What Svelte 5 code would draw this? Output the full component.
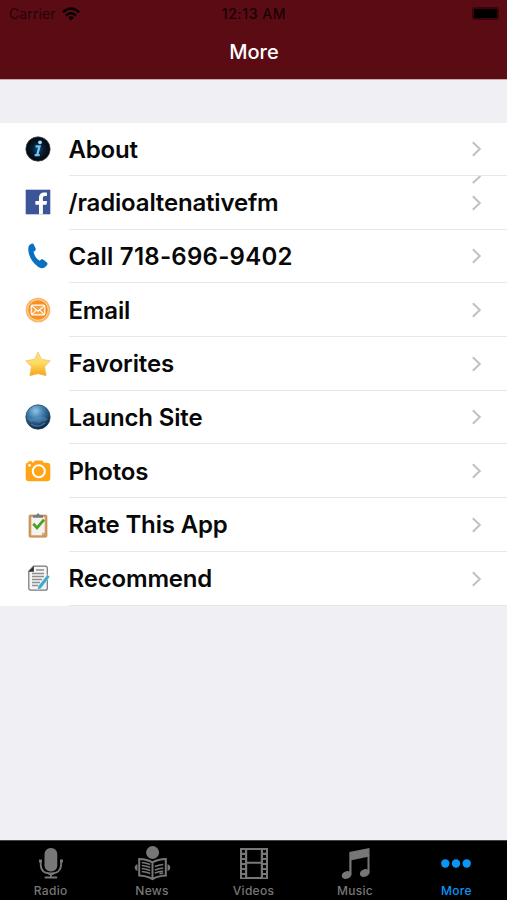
<script lang="ts">
	interface IRow {
		icon: string;
		label: string;
	}

	const rows: IRow[] = [
		{ icon: 'about', label: 'About' },
		{ icon: 'facebook', label: '/radioaltenativefm' },
		{ icon: 'call', label: 'Call 718-696-9402' },
		{ icon: 'email', label: 'Email' },
		{ icon: 'favorites', label: 'Favorites' },
		{ icon: 'site', label: 'Launch Site' },
		{ icon: 'photos', label: 'Photos' },
		{ icon: 'rate', label: 'Rate This App' },
		{ icon: 'recommend', label: 'Recommend' }
	];

	const tabs = ['Radio', 'News', 'Videos', 'Music', 'More'];
	let active = $state('More');
</script>

<div class="screen">
	<header>
		<div class="status">
			<div class="carrier">
				<span>Carrier</span>
				<svg width="18" height="14" viewBox="0 0 18 14">
					<g fill="none" stroke="#080002" stroke-width="2.5">
						<path d="M1 5.3Q9-2.3 17 5.3" />
						<path d="M4 8.6Q9 3.8 14 8.6" />
					</g>
					<path d="M6 10.6Q9 8 12 10.6L9 13.8Z" fill="#080002" />
				</svg>
			</div>
			<span class="time">12:13 AM</span>
			<div class="battery"><i></i></div>
		</div>
		<h1>More</h1>
	</header>

	<main>
		<ul>
			{#each rows as row}
				<li>
					<svg class="icon" viewBox="0 0 26 26">
						{#if row.icon === 'about'}
							<defs>
								<radialGradient id="info">
									<stop offset="0" stop-color="#124a75" />
									<stop offset="0.5" stop-color="#081b2d" />
									<stop offset="1" stop-color="#03070c" />
								</radialGradient>
							</defs>
							<circle cx="13" cy="13" r="12.2" fill="url(#info)" stroke="#4b5259" stroke-width="0.7" />
							<circle cx="15" cy="6.3" r="1.9" fill="#9fdcfb" />
							<path d="M10.5 10.300h4l-2.400 8.900h2.600M9.600 19.200h3" fill="none" stroke="#6ec5f5" stroke-width="2.3" />
						{:else if row.icon === 'facebook'}
							<rect x="0.7" y="0.7" width="24.6" height="24.6" fill="#3c5598" />
							<path d="M14 25.3v-9.600h-3.600v-3.600H14V9c0-3.700 2.200-5.500 5.400-5.500h2.500v3.600h-1.800c-1.600 0-2.200.8-2.200 2.200v2.800h4.200l-.6 3.600h-3.600v9.600z" fill="#fff" />
						{:else if row.icon === 'call'}
							<path d="M5.200 1.400C7 .2 8.200.4 8.900 1.700l1.700 3.600c.5 1.300-.1 2.300-2 3.300.4 3.800 2.900 7.300 6.200 9.100 1.500-1.500 2.600-1.700 3.700-.9l3.100 2.400c1.100.9 1.200 1.800.3 3-2.400 3.300-5.700 3.800-8.900 1.600C7.400 19.400 3.900 14.100 3.300 7.300 3.200 4.500 3.500 2.500 5.200 1.400Z" fill="#0871c2" />
						{:else if row.icon === 'email'}
							<circle cx="13" cy="13" r="12.3" fill="#fbb467" />
							<circle cx="13" cy="13" r="10.3" fill="#f4911f" stroke="#fed5a5" stroke-width="1" />
							<rect x="6.2" y="8.1" width="13.6" height="9.8" rx="1.5" fill="#f7a347" stroke="#fff" stroke-width="1.2" />
							<path d="M6.700 8.800l6.300 5.400 6.300-5.400M6.700 17.300l4.700-4.200M19.300 17.300l-4.700-4.200" fill="none" stroke="#fff" stroke-width="1.1" />
						{:else if row.icon === 'favorites'}
							<defs>
								<linearGradient id="star" x2="0" y2="1">
									<stop offset="0" stop-color="#f8dc93" />
									<stop offset="0.45" stop-color="#ffdd62" />
									<stop offset="1" stop-color="#f5a313" />
								</linearGradient>
							</defs>
							<path d="M13 1l3.400 7.200 8.900 1.600-5.700 6 1.600 9L13 22.700l-8.200 2.100 1.600-9-5.700-6 8.900-1.600z" fill="url(#star)" stroke="#eeb757" stroke-width="0.6" stroke-linejoin="round" />
						{:else if row.icon === 'site'}
							<defs>
								<radialGradient id="globe" cx="0.4" cy="0.25" r="0.75">
									<stop offset="0" stop-color="#8fc3e5" />
									<stop offset="0.45" stop-color="#3c7aab" />
									<stop offset="1" stop-color="#082543" />
								</radialGradient>
							</defs>
							<circle cx="13" cy="13" r="12.2" fill="url(#globe)" stroke="#26435c" stroke-width="0.7" />
							<path d="M2 13q5 3 9 1 4-2 9-1l3 2q-2 3-6 2l-3 2-4-2-5 1z" fill="#79aace" opacity="0.3" />
							<path d="M6 20q7 5 14-1" fill="none" stroke="#6fabd2" stroke-width="1.5" opacity="0.45" />
						{:else if row.icon === 'photos'}
							<path d="M3.300 4.400V3.200h3.800v1.200h1.400l1.300-1.900h7.400l1.800 2.300h3.200c2.200 0 3.100 1 3.100 3V20c0 2.200-1 3.200-3.100 3.200H3.800c-2.100 0-3.100-1-3.100-3.200V7.400c0-2 1-3 2.600-3z" fill="#ffa414" />
							<circle cx="13.8" cy="13.3" r="6" fill="none" stroke="#fff" stroke-width="2" />
							<circle cx="4.500" cy="7.300" r="1.400" fill="#fff" />
						{:else if row.icon === 'rate'}
							<rect x="4" y="3" width="18" height="22.2" rx="1.3" fill="#d49a5c" stroke="#b98148" stroke-width="0.6" />
							<path d="M6.300 5h13.400v15.700l-2.800 2.500H6.300z" fill="#f4f3f1" />
							<path d="M19.700 20.700h-2.800v2.500z" fill="#b9b6b0" />
							<path d="M8 5.700V3.300h3.300Q13-.8 14.700 3.300H18v2.400z" fill="#77797c" />
							<path d="M8.300 11.700l3.700 4.200 7-8.200" fill="none" stroke="#4ba126" stroke-width="2.800" />
						{:else}
							<path d="M8.500 1.200h11.800q2 0 2 2v20q0 2-2 2H5.800q-2 0-2-2V6.200z" fill="#f5f5f5" stroke="#777" stroke-width="1.2" />
							<path d="M8.900 1v5.800H3.400z" fill="#303030" />
							<path d="M11 5h8M7 8.500h12M7 11.500h12M7 14.500h10M7 17.500h8M7 20.500h6" stroke="#8e8e8e" stroke-width="1.3" />
							<path d="M22.300 9.700l2.500 2-8.600 11.500-3.800 1.800.8-3.900z" fill="#43a9ca" stroke="#d7eff5" stroke-width="0.5" />
						{/if}
					</svg>
					<div class="content">
						<span class="label" class:phone={row.icon === 'call'}>{row.label}</span>
						<svg class="chevron" width="12" height="16" viewBox="0 0 12 16">
							<path d="M1.800 1.200L8.800 8l-7 6.800" />
						</svg>
						{#if row.icon === 'facebook'}
							<svg class="sliver" width="12" height="8" viewBox="0 0 12 8">
								<path d="M9.500 0L1.800 7" />
							</svg>
						{/if}
					</div>
				</li>
			{/each}
		</ul>
	</main>

	<nav>
		{#each tabs as tab}
			<button class:active={active === tab} onclick={() => (active = tab)}>
				<svg width="40" height="38" viewBox="0 0 40 38" fill="currentColor">
					{#if tab === 'Radio'}
						<rect x="13.5" y="2" width="12.8" height="23.500" rx="6" />
						<path d="M9.700 15v3.200c0 6 3.800 9.300 10.200 9.300s10.200-3.300 10.200-9.300V15M19.900 27v4" fill="none" stroke="currentColor" stroke-width="1.8" />
						<path d="M8 13.500h3v3H8zM29 13.500h3v3h-3zM13.700 30.500h12.500v2H13.700zM17.500 27h5v2h-5z" />
					{:else if tab === 'News'}
						<circle cx="20.600" cy="6.500" r="6.500" />
						<path d="M5.500 18.200q-3 1-2.800 3.500.2 2.500 2.800 3.300zM35.500 18.200q3 1 2.800 3.500-.2 2.500-2.800 3.300z" />
						<path d="M7.200 13q8 .3 13.300 3.400Q25.800 13.300 33.800 13v16.600Q25.800 30 20.500 33.200 15.200 30 7.200 29.600zM20.500 16.400v16.500" fill="#000" stroke="currentColor" stroke-width="2" />
						<path d="M9.800 16.500q5 .5 8.400 2M9.800 19.500q5 .5 8.400 2M9.800 22.500q5 .5 8.400 2M9.800 25.500q5 .5 8.400 2M22.800 20.500q4-1.500 8.400-2M22.800 24q4-1.500 8.400-2M22.800 27q4-1.500 8.400-2M27.500 27.600l3.700-.6" fill="none" stroke="currentColor" stroke-width="1.6" />
					{:else if tab === 'Videos'}
						<path fill-rule="evenodd" d="M6 2h28v31H6zM13.200 4v11.800h13.600V4zM13.200 17.800V31h13.600V17.800zM8 4v2.800h3V4zM8 9v3h3V9zM8 14v3h3v-3zM8 19v3h3v-3zM8 24v3h3v-3zM8 29v2.500h3V29zM29 4v2.800h3V4zM29 9v3h3V9zM29 14v3h3v-3zM29 19v3h3v-3zM29 24v3h3v-3zM29 29v2.500h3V29z" />
					{:else if tab === 'Music'}
						<path d="M14.300 6L34.500 2v8.500l-18 3.800v14h-2.200z" />
						<path d="M32.500 9h2v17.500h-2z" />
						<ellipse cx="11.600" cy="29" rx="5" ry="3.700" transform="rotate(-20 11.600 29)" />
						<ellipse cx="29.700" cy="27" rx="5" ry="3.700" transform="rotate(-20 29.700 27)" />
					{:else}
						<circle cx="9.300" cy="17.500" r="4.200" />
						<circle cx="20" cy="17.500" r="4.200" />
						<circle cx="30.700" cy="17.500" r="4.200" />
					{/if}
				</svg>
				<span>{tab}</span>
			</button>
		{/each}
	</nav>
</div>

<style>
	.screen {
		width: 507px;
		height: 900px;
		display: flex;
		flex-direction: column;
		overflow: hidden;
		background: #efeff4;
		font-family: Inter, 'Liberation Sans', sans-serif;
	}

	header {
		height: 80px;
		flex: none;
		box-sizing: border-box;
		background: #5b0b14;
		border-bottom: 1px solid #c9a9af;
		color: #fff;
	}

	.status {
		display: grid;
		grid-template-columns: 1fr auto 1fr;
		align-items: center;
		height: 27px;
		padding: 0 8px 0 9px;
		color: #250308;
		font-size: 14px;
	}

	.carrier {
		display: flex;
		align-items: center;
		gap: 6px;
		letter-spacing: 0.1px;
	}

	.time {
		font-weight: 500;
		font-size: 14px;
		letter-spacing: 0.6px;
		color: #180205;
	}

	.battery {
		justify-self: end;
		padding: 2px;
		border-radius: 3px;
		background: #3c0309;
	}

	.battery i {
		display: block;
		width: 23px;
		height: 9px;
		border-radius: 1px;
		background: #000;
	}

	h1 {
		margin: 0;
		padding-left: 1px;
		font-size: 20px;
		line-height: 51px;
		font-weight: 500;
		text-align: center;
	}

	main {
		flex: 1;
		padding-top: 43px;
	}

	ul {
		list-style: none;
		margin: 0;
		padding: 0;
		background: #fff;
	}

	li {
		display: flex;
		height: 53.7px;
	}

	.icon {
		width: 26px;
		height: 26px;
		margin: 12.8px 18px 0 24.5px;
		flex: none;
	}

	.content {
		position: relative;
		display: flex;
		align-items: center;
		flex: 1;
		height: 53px;
		box-sizing: border-box;
		border-bottom: 1px solid #e8e8ea;
		padding-right: 24px;
	}

	.label {
		flex: 1;
		font-size: 24px;
		font-weight: 600;
		letter-spacing: -0.17px;
		color: #080808;
	}

	.label.phone {
		letter-spacing: 0.25px;
	}

	.chevron path,
	.sliver path {
		fill: none;
		stroke: #c1c1c4;
		stroke-width: 2;
	}

	/* tail of the row above's chevron */
	.sliver {
		position: absolute;
		top: -1px;
		right: 24px;
	}

	nav {
		display: flex;
		height: 60px;
		flex: none;
		box-sizing: border-box;
		border-top: 1px solid #444;
		background: #000;
	}

	button {
		flex: 1;
		display: flex;
		flex-direction: column;
		align-items: center;
		padding: 5px 0 0;
		border: 0;
		background: none;
		color: #777;
		font: 500 12px/14px Inter, 'Liberation Sans', sans-serif;
		letter-spacing: 0.3px;
	}

	button.active {
		color: #0996f8;
	}
</style>
